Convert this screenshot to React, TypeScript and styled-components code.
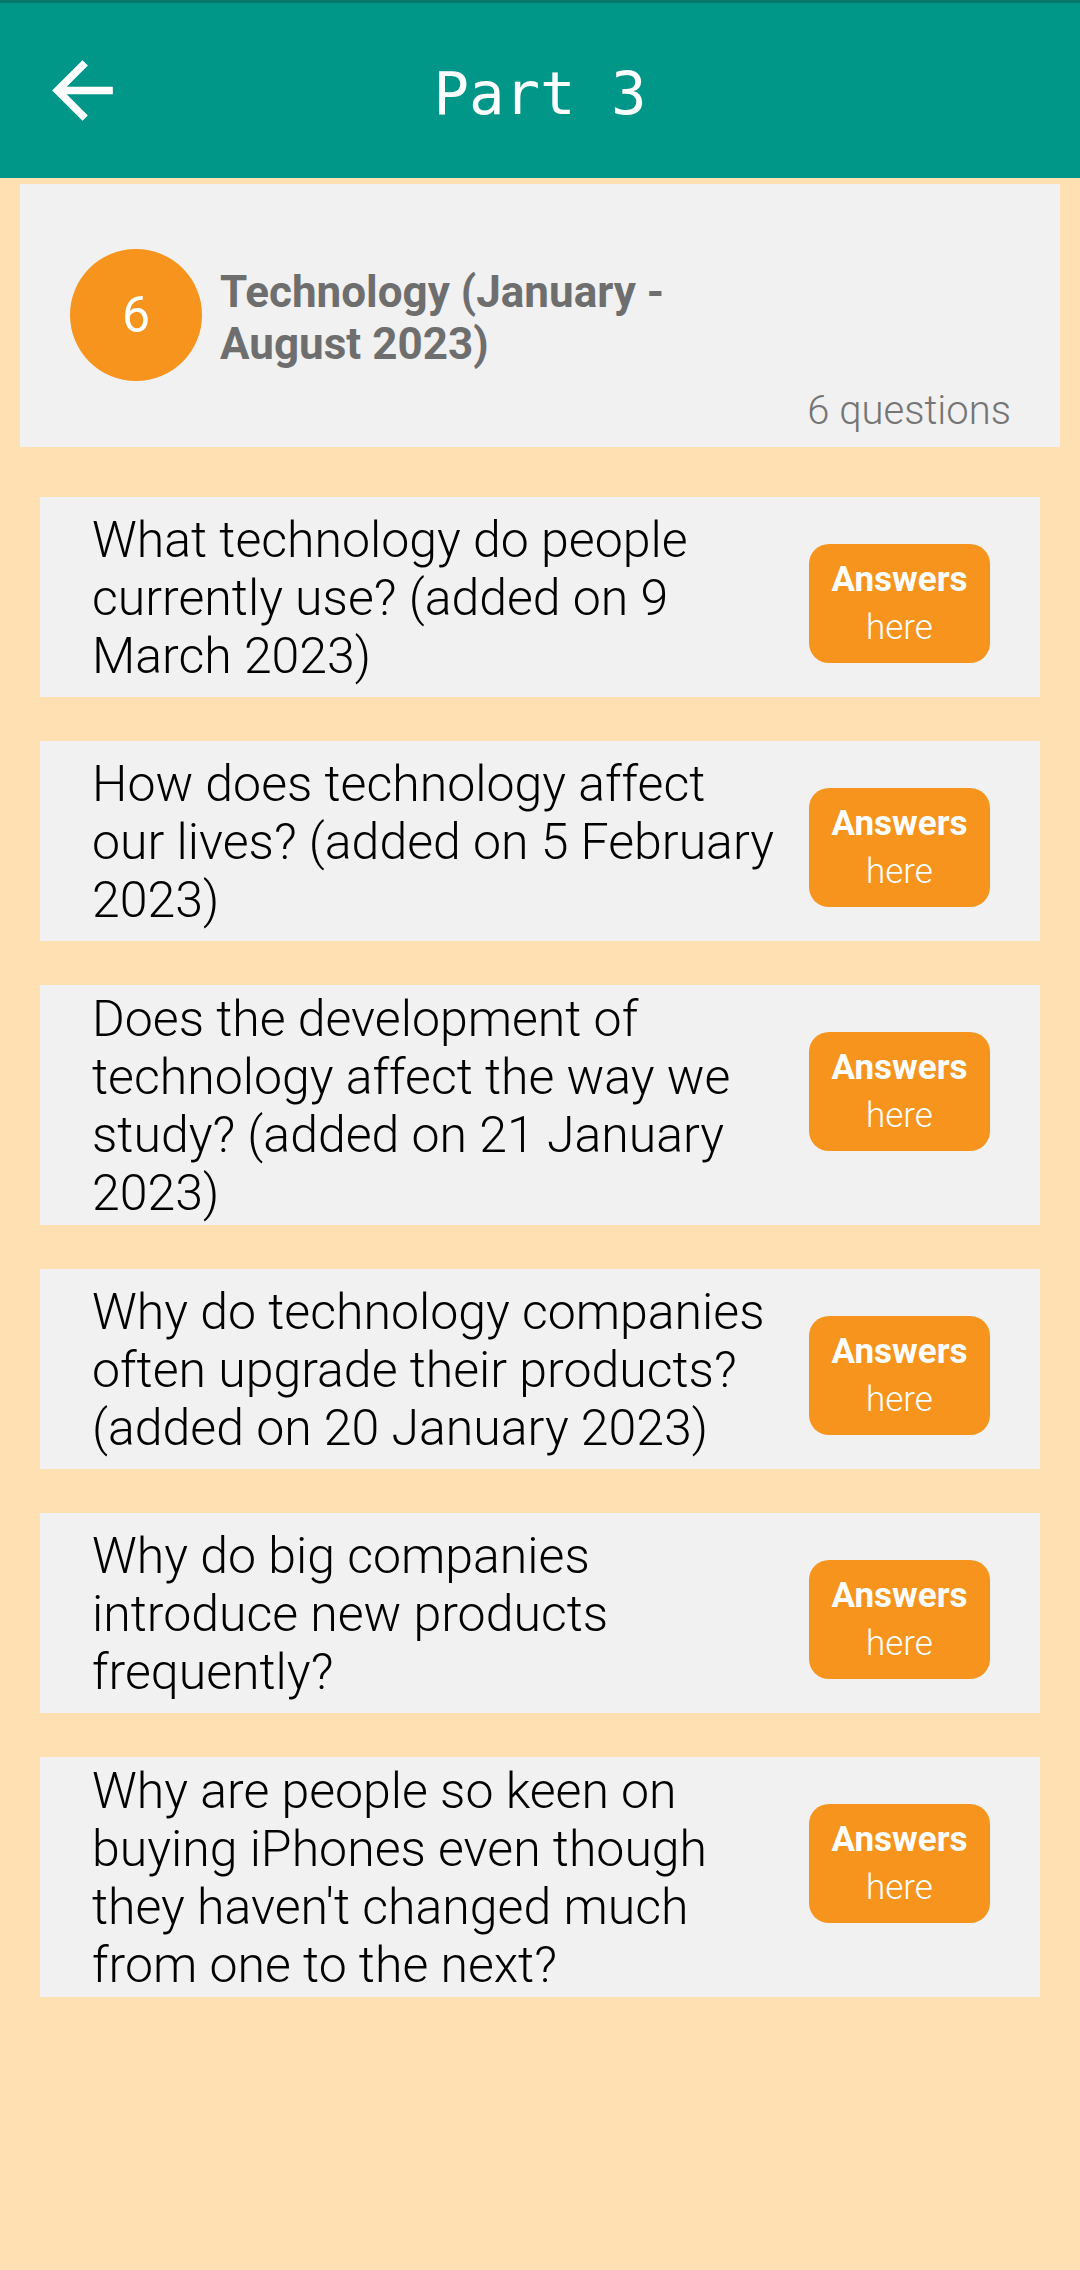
import React from 'react';
import styled, { createGlobalStyle } from 'styled-components';

const GlobalStyle = createGlobalStyle`
  html, body {
    margin: 0;
    padding: 0;
    background: #ffe0b2;
  }
  body {
    font-family: Roboto, 'Noto Sans', sans-serif;
  }
`;

const Screen = styled.div`
  min-height: 2270px;
  background: #ffe0b2;
`;

const TopBar = styled.header`
  height: 175px;
  border-top: 3px solid #07786b;
  background: #009688;
  display: grid;
  grid-template-columns: 1fr auto 1fr;
  align-items: center;
`;

const BackButton = styled.button`
  justify-self: start;
  display: flex;
  width: 91px;
  height: 91px;
  margin-left: 37px;
  padding: 0;
  border: 0;
  background: none;
  color: #fff;
`;

const Title = styled.h1`
  margin: 6px 0 0;
  font-family: 'DejaVu Sans Mono', monospace;
  font-size: 59px;
  font-weight: 400;
  color: #fff;
`;

const TopicCard = styled.section`
  margin: 6px 20px 0;
  padding: 65px 49px 14px 50px;
  background: #f1f1f1;
`;

const TopicRow = styled.div`
  display: flex;
  align-items: center;
  gap: 18px;
`;

const Badge = styled.div`
  flex-shrink: 0;
  width: 132px;
  height: 132px;
  border-radius: 50%;
  background: #f7941e;
  color: #fff;
  font-size: 50px;
  display: flex;
  align-items: center;
  justify-content: center;
`;

const TopicTitle = styled.div`
  max-width: 540px;
  margin-top: 6px;
  font-size: 44px;
  font-weight: 700;
  line-height: 52px;
  color: #6e6e6e;
`;

const Count = styled.div`
  margin-top: 7px;
  text-align: right;
  font-size: 40px;
  font-weight: 300;
  line-height: 45px;
  color: #757575;
`;

const QuestionList = styled.div`
  display: flex;
  flex-direction: column;
  gap: 44px;
  padding: 50px 40px;
`;

const QuestionCard = styled.div`
  display: flex;
  gap: 27px;
  min-height: 200px;
  padding: 0 50px 0 52px;
  background: #f1f1f1;
`;

const QuestionText = styled.p`
  flex: 1;
  align-self: center;
  margin: 0;
  padding: 5px 0 3px;
  font-size: 50px;
  font-weight: 300;
  line-height: 58px;
  color: #000;
`;

const AnswerButton = styled.button`
  flex-shrink: 0;
  align-self: flex-start;
  margin-top: 47px;
  width: 181px;
  height: 119px;
  border: 0;
  border-radius: 20px;
  background: #f7941e;
  color: #fff;
  font-family: Roboto, sans-serif;
  font-size: 35px;
  line-height: 48px;
  display: flex;
  flex-direction: column;
  align-items: center;
  justify-content: center;
`;

const Strong = styled.span`
  font-weight: 700;
`;

const Light = styled.span`
  font-weight: 300;
`;

const questions = [
  'What technology do people currently use? (added on 9 March 2023)',
  'How does technology affect our lives? (added on 5 February 2023)',
  'Does the development of technology affect the way we study? (added on 21 January 2023)',
  'Why do technology companies often upgrade their products? (added on 20 January 2023)',
  'Why do big companies introduce new products frequently?',
  "Why are people so keen on buying iPhones even though they haven't changed much from one to the next?",
];

function BackArrow() {
  return (
    <svg width="91" height="91" viewBox="0 0 24 24" fill="currentColor">
      <path d="M20 11H7.83l5.59-5.59L12 4l-8 8 8 8 1.41-1.41L7.83 13H20v-2z" />
    </svg>
  );
}

export default function App() {
  return (
    <Screen>
      <GlobalStyle />
      <TopBar>
        <BackButton aria-label="Back">
          <BackArrow />
        </BackButton>
        <Title>Part 3</Title>
      </TopBar>

      <TopicCard>
        <TopicRow>
          <Badge>6</Badge>
          <TopicTitle>Technology (January - August 2023)</TopicTitle>
        </TopicRow>
        <Count>6 questions</Count>
      </TopicCard>

      <QuestionList>
        {questions.map((q) => (
          <QuestionCard key={q}>
            <QuestionText>{q}</QuestionText>
            <AnswerButton>
              <Strong>Answers</Strong>
              <Light>here</Light>
            </AnswerButton>
          </QuestionCard>
        ))}
      </QuestionList>
    </Screen>
  );
}
